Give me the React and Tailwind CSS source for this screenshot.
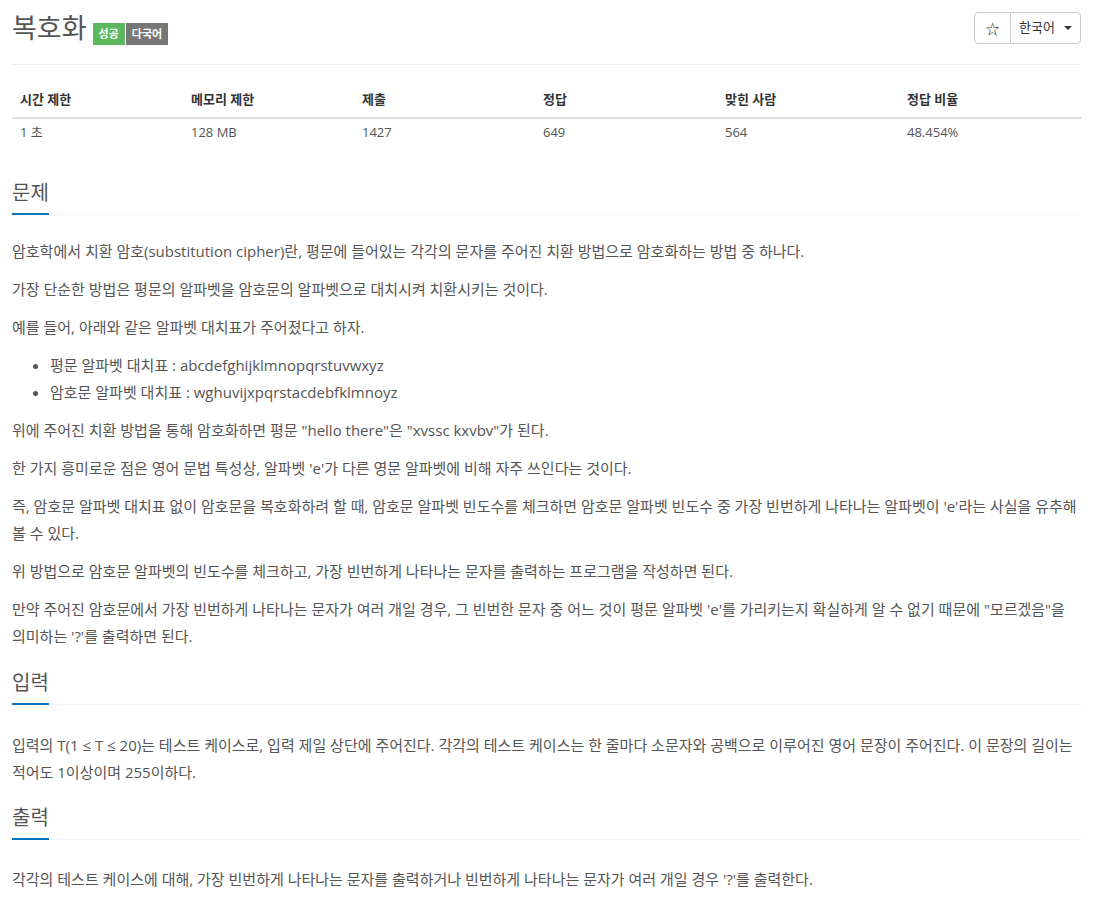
import React from "react";

const stats = [
  { label: "시간 제한", value: "1 초", w: "w-[171px]" },
  { label: "메모리 제한", value: "128 MB", w: "w-[171px]" },
  { label: "제출", value: "1427", w: "w-[181px]" },
  { label: "정답", value: "649", w: "w-[182px]" },
  { label: "맞힌 사람", value: "564", w: "w-[182px]" },
  { label: "정답 비율", value: "48.454%", w: "w-[182px]" },
];

const Headline = ({ children, className = "" }) => (
  <div className={`border-b border-dotted border-[#e4e9f0] ${className}`}>
    <h2 className="inline-block text-[20px] leading-[30px] pb-[5px] -mb-px border-b-2 border-[#0076c0] text-[#555]">
      {children}
    </h2>
  </div>
);

const P = ({ children }) => <p className="mb-[11px]">{children}</p>;

export default function App() {
  return (
    <div
      className="w-[1093px] px-3 bg-white text-[#555]"
      style={{ fontFamily: '"Open Sans", "Noto Sans CJK KR", sans-serif' }}
    >
      {/* Title */}
      <div className="flex items-start justify-between pt-3 pb-[19px] border-b border-[#eee]">
        <div className="flex items-start">
          <h1 className="text-[27px] leading-[32px] text-[#555]">복호화</h1>
          <span className="ml-[6px] mt-[11px] bg-[#5cb85c] text-white text-[11px] font-bold leading-[22px] px-[6px]">
            성공
          </span>
          <span className="ml-px mt-[11px] bg-[#777] text-white text-[11px] font-bold leading-[22px] px-[6px]">
            다국어
          </span>
        </div>
        <div className="flex h-[32px] text-[13px] text-[#333]">
          <button className="w-[37px] border border-[#ccc] rounded-l-[4px] flex items-center justify-center text-[14px]">
            ☆
          </button>
          <button className="w-[71px] -ml-px border border-[#ccc] rounded-r-[4px] flex items-center pl-[8px] gap-[9px]">
            한국어
            <span className="border-x-[4px] border-x-transparent border-t-[4px] border-t-[#333]" />
          </button>
        </div>
      </div>

      {/* Stats table */}
      <table className="mt-[18px] text-[13px] border-collapse">
        <thead>
          <tr className="border-b-2 border-[#ddd]">
            {stats.map((s) => (
              <th
                key={s.label}
                className={`${s.w} text-left font-bold text-[#333] px-2 h-[35px] align-middle`}
              >
                {s.label}
              </th>
            ))}
          </tr>
        </thead>
        <tbody>
          <tr>
            {stats.map((s) => (
              <td key={s.label} className="px-2 h-[29px] align-middle">
                {s.value}
              </td>
            ))}
          </tr>
        </tbody>
      </table>

      <div className="text-[15px] leading-[27px]">
        {/* 문제 */}
        <Headline className="mt-[31px]">문제</Headline>
        <div className="mt-[23px]">
          <P>
            암호학에서 치환 암호(substitution cipher)란, 평문에 들어있는 각각의 문자를 주어진 치환
            방법으로 암호화하는 방법 중 하나다.
          </P>
          <P>가장 단순한 방법은 평문의 알파벳을 암호문의 알파벳으로 대치시켜 치환시키는 것이다.</P>
          <P>예를 들어, 아래와 같은 알파벳 대치표가 주어졌다고 하자.</P>
          <ul className="list-disc pl-[38px] mb-[11px]">
            <li>평문 알파벳 대치표 : abcdefghijklmnopqrstuvwxyz</li>
            <li>암호문 알파벳 대치표 : wghuvijxpqrstacdebfklmnoyz</li>
          </ul>
          <P>위에 주어진 치환 방법을 통해 암호화하면 평문 "hello there"은 "xvssc kxvbv"가 된다.</P>
          <P>
            한 가지 흥미로운 점은 영어 문법 특성상, 알파벳 'e'가 다른 영문 알파벳에 비해 자주
            쓰인다는 것이다.
          </P>
          <P>
            즉, 암호문 알파벳 대치표 없이 암호문을 복호화하려 할 때, 암호문 알파벳 빈도수를 체크하면
            암호문 알파벳 빈도수 중 가장 빈번하게 나타나는 알파벳이 'e'라는 사실을 유추해 볼 수
            있다.
          </P>
          <P>
            위 방법으로 암호문 알파벳의 빈도수를 체크하고, 가장 빈번하게 나타나는 문자를 출력하는
            프로그램을 작성하면 된다.
          </P>
          <P>
            만약 주어진 암호문에서 가장 빈번하게 나타나는 문자가 여러 개일 경우, 그 빈번한 문자 중
            어느 것이 평문 알파벳 'e'를 가리키는지 확실하게 알 수 없기 때문에 "모르겠음"을 의미하는
            '?'를 출력하면 된다.
          </P>
        </div>

        {/* 입력 */}
        <Headline className="mt-[18px]">입력</Headline>
        <div className="mt-[27px]">
          <P>
            입력의 T(1 ≤ T ≤ 20)는 테스트 케이스로, 입력 제일 상단에 주어진다. 각각의 테스트 케이스는
            한 줄마다 소문자와 공백으로 이루어진 영어 문장이 주어진다. 이 문장의 길이는 적어도
            1이상이며 255이하다.
          </P>
        </div>

        {/* 출력 */}
        <Headline className="mt-[17px]">출력</Headline>
        <div className="mt-[26px]">
          <P>
            각각의 테스트 케이스에 대해, 가장 빈번하게 나타나는 문자를 출력하거나 빈번하게 나타나는
            문자가 여러 개일 경우 '?'를 출력한다.
          </P>
        </div>
      </div>
    </div>
  );
}
